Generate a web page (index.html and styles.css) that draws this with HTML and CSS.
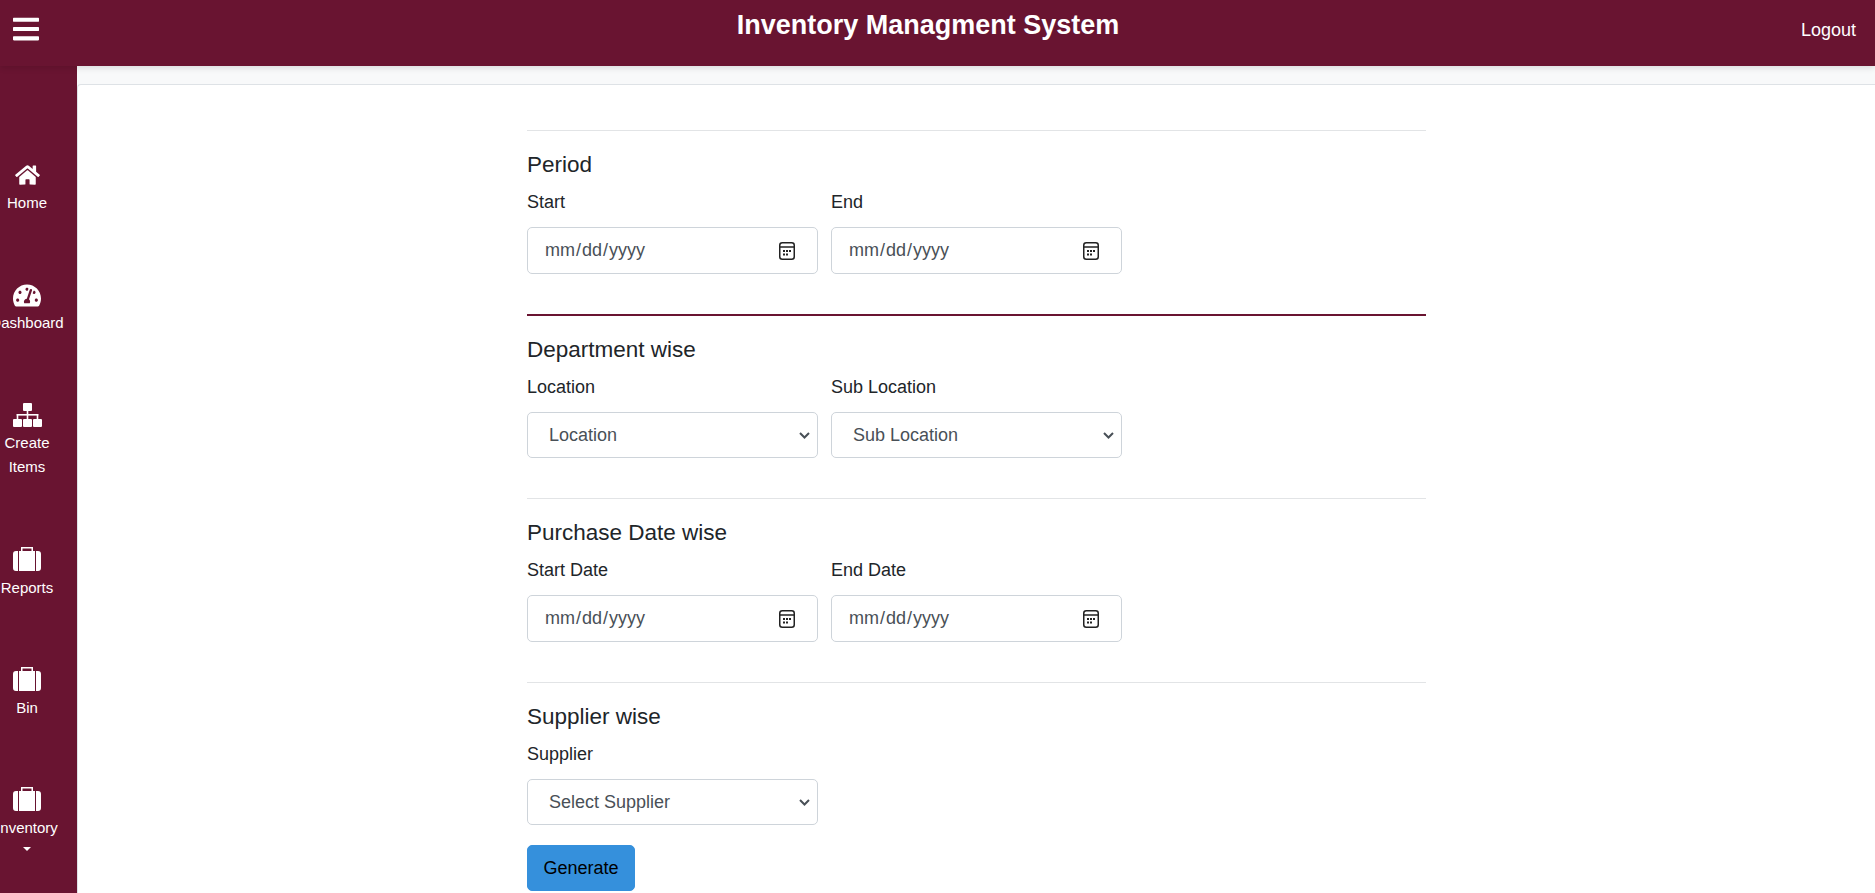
FILE: index.html
```html
<!DOCTYPE html>
<html lang="en">
<head>
  <meta charset="UTF-8">
  <title>Inventory Managment System</title>
  <link rel="stylesheet" href="styles.css">
</head>
<body>

  <header class="topbar">
    <div class="menu-toggle">
      <svg class="icon-bars" viewBox="0 0 448 512"><path d="M16 132h416c8.837 0 16-7.163 16-16V76c0-8.837-7.163-16-16-16H16C7.163 60 0 67.163 0 76v40c0 8.837 7.163 16 16 16zm0 160h416c8.837 0 16-7.163 16-16v-40c0-8.837-7.163-16-16-16H16c-8.837 0-16 7.163-16 16v40c0 8.837 7.163 16 16 16zm0 160h416c8.837 0 16-7.163 16-16v-40c0-8.837-7.163-16-16-16H16c-8.837 0-16 7.163-16 16v40c0 8.837 7.163 16 16 16z"/></svg>
    </div>
    <h1 class="app-title">Inventory Managment System</h1>
    <a class="logout" href="#">Logout</a>
  </header>

  <div class="layout">
    <nav class="sidebar">
      <a class="nav-item" href="#">
        <span class="nav-icon"><svg class="icon-home" viewBox="0 0 576 512"><path d="M280.37 148.26L96 300.11V464a16 16 0 0 0 16 16l112.06-.29a16 16 0 0 0 15.92-16V368a16 16 0 0 1 16-16h64a16 16 0 0 1 16 16v95.64a16 16 0 0 0 16 16.05L464 480a16 16 0 0 0 16-16V300L295.67 148.26a12.19 12.19 0 0 0-15.3 0zM571.6 251.47L488 182.56V44.05a12 12 0 0 0-12-12h-56a12 12 0 0 0-12 12v72.61L318.47 43a48 48 0 0 0-61 0L4.34 251.47a12 12 0 0 0-1.6 16.9l25.5 31A12 12 0 0 0 45.15 301l235.22-193.74a12.19 12.19 0 0 1 15.3 0L530.9 301a12 12 0 0 0 16.9-1.6l25.5-31a12 12 0 0 0-1.7-16.93z"/></svg></span>
        <span class="nav-label">Home</span>
      </a>
      <a class="nav-item" href="#">
        <span class="nav-icon"><svg class="icon-gauge" viewBox="0 0 576 512"><path d="M288 32C128.94 32 0 160.94 0 320c0 52.8 14.25 102.26 39.06 144.8 5.61 9.62 16.3 15.2 27.44 15.2h443c11.14 0 21.83-5.58 27.44-15.2C561.75 422.26 576 372.8 576 320c0-159.06-128.94-288-288-288zm0 64c14.71 0 26.58 10.13 30.32 23.65-1.11 2.26-2.64 4.23-3.45 6.67l-9.22 27.67c-5.13 3.49-10.97 6.01-17.64 6.01-17.67 0-32-14.33-32-32S270.33 96 288 96zM96 384c-17.67 0-32-14.33-32-32s14.33-32 32-32 32 14.33 32 32-14.33 32-32 32zm48-160c-17.67 0-32-14.33-32-32s14.33-32 32-32 32 14.33 32 32-14.33 32-32 32zm246.77-72.41l-61.33 184C343.13 347.33 352 364.54 352 384c0 11.72-3.38 22.55-8.88 32H232.88c-5.5-9.45-8.88-20.28-8.88-32 0-33.94 26.5-61.43 59.9-63.59l61.34-184.01c4.17-12.56 17.73-19.45 30.36-15.17 12.57 4.19 19.35 17.79 15.17 30.36zm14.66 57.2l15.52-46.55c3.47-1.29 7.13-2.23 11.05-2.23 17.67 0 32 14.33 32 32s-14.33 32-32 32c-11.38-.01-20.89-6.28-26.57-15.22zM480 384c-17.67 0-32-14.33-32-32s14.33-32 32-32 32 14.33 32 32-14.33 32-32 32z"/></svg></span>
        <span class="nav-label">Dashboard</span>
      </a>
      <a class="nav-item" href="#">
        <span class="nav-icon"><svg class="icon-sitemap" viewBox="0 0 29 24"><rect x="10" y="0" width="9" height="8" rx="1"/><rect x="13.7" y="8" width="1.6" height="8"/><rect x="3.7" y="11" width="21.6" height="1.6"/><rect x="3.7" y="11" width="1.6" height="5"/><rect x="23.7" y="11" width="1.6" height="5"/><rect x="0" y="16" width="9" height="8" rx="1"/><rect x="10" y="16" width="9" height="8" rx="1"/><rect x="20" y="16" width="9" height="8" rx="1"/></svg></span>
        <span class="nav-label">Create</span>
        <span class="nav-label">Items</span>
      </a>
      <a class="nav-item" href="#">
        <span class="nav-icon"><svg class="icon-suitcase" viewBox="0 0 28 24"><path d="M5 4H3a3 3 0 0 0-3 3v14a3 3 0 0 0 3 3h2zM6 4h16v20H6zM23 4h2a3 3 0 0 1 3 3v14a3 3 0 0 1-3 3h-2z"/><rect class="handle" x="8.75" y=".75" width="10.5" height="4"/></svg></span>
        <span class="nav-label">Reports</span>
      </a>
      <a class="nav-item" href="#">
        <span class="nav-icon"><svg class="icon-suitcase" viewBox="0 0 28 24"><path d="M5 4H3a3 3 0 0 0-3 3v14a3 3 0 0 0 3 3h2zM6 4h16v20H6zM23 4h2a3 3 0 0 1 3 3v14a3 3 0 0 1-3 3h-2z"/><rect class="handle" x="8.75" y=".75" width="10.5" height="4"/></svg></span>
        <span class="nav-label">Bin</span>
      </a>
      <a class="nav-item" href="#">
        <span class="nav-icon"><svg class="icon-suitcase" viewBox="0 0 28 24"><path d="M5 4H3a3 3 0 0 0-3 3v14a3 3 0 0 0 3 3h2zM6 4h16v20H6zM23 4h2a3 3 0 0 1 3 3v14a3 3 0 0 1-3 3h-2z"/><rect class="handle" x="8.75" y=".75" width="10.5" height="4"/></svg></span>
        <span class="nav-label">Inventory</span>
        <span class="nav-caret"></span>
      </a>
    </nav>

    <main class="content">
      <div class="card">
        <form class="report-form">
          <section class="form-section">
            <h5>Period</h5>
            <div class="field-row">
              <div class="field">
                <label>Start</label>
                <input type="date" class="form-input">
              </div>
              <div class="field">
                <label>End</label>
                <input type="date" class="form-input">
              </div>
            </div>
          </section>

          <section class="form-section accent">
            <h5>Department wise</h5>
            <div class="field-row">
              <div class="field">
                <label>Location</label>
                <select class="form-select"><option>Location</option></select>
              </div>
              <div class="field">
                <label>Sub Location</label>
                <select class="form-select"><option>Sub Location</option></select>
              </div>
            </div>
          </section>

          <section class="form-section">
            <h5>Purchase Date wise</h5>
            <div class="field-row">
              <div class="field">
                <label>Start Date</label>
                <input type="date" class="form-input">
              </div>
              <div class="field">
                <label>End Date</label>
                <input type="date" class="form-input">
              </div>
            </div>
          </section>

          <section class="form-section last">
            <h5>Supplier wise</h5>
            <div class="field-row">
              <div class="field">
                <label>Supplier</label>
                <select class="form-select"><option>Select Supplier</option></select>
              </div>
            </div>
            <button type="button" class="btn-generate">Generate</button>
          </section>
        </form>
      </div>
    </main>
  </div>

</body>
</html>
```

FILE: styles.css
```css
* {
  box-sizing: border-box;
}

html, body {
  height: 100%;
}

body {
  margin: 0;
  font-family: "Liberation Sans", Arial, sans-serif;
  font-size: 18px;
  line-height: 1.5;
  color: #212529;
  background-color: #f8f9fa;
  overflow: hidden;
}

/* top bar */
.topbar {
  position: relative;
  z-index: 2;
  display: grid;
  grid-template-columns: 1fr auto 1fr;
  height: 66px;
  padding: 0 19px 0 13px;
  background-color: #691431;
  color: #fff;
  box-shadow: 0 2px 6px rgba(0, 0, 0, .12);
}

.menu-toggle {
  padding-top: 14px;
}

.icon-bars {
  display: block;
  width: 26px;
  height: 30px;
  fill: #fff;
}

.app-title {
  margin: 7px 13px 0 0;
  font-size: 27px;
  font-weight: 700;
  line-height: 36px;
}

.logout {
  justify-self: end;
  padding-top: 17px;
  color: #fff;
  text-decoration: none;
}

/* sidebar + page */
.layout {
  display: flex;
  height: calc(100% - 66px);
}

.sidebar {
  flex: 0 0 77px;
  padding: 95px 23px 0 0;
  background-color: #691431;
  overflow: hidden;
}

.nav-item {
  display: flex;
  flex-direction: column;
  align-items: center;
  margin-bottom: 66.2px;
  color: #fff;
  text-decoration: none;
}

.nav-icon {
  display: flex;
  align-items: center;
  justify-content: center;
  height: 30px;
  padding-bottom: 2px;
}

.nav-icon svg {
  display: block;
  fill: #fff;
}

.icon-home {
  width: 25px;
  height: 22px;
}

.icon-gauge {
  width: 28px;
  height: 25px;
}

.icon-sitemap {
  width: 29px;
  height: 24px;
}

.icon-suitcase {
  width: 28px;
  height: 24px;
  margin-bottom: 2px;
}

.icon-suitcase .handle {
  fill: none;
  stroke: #fff;
  stroke-width: 1.5;
}

.nav-label {
  font-size: 15px;
  line-height: 24px;
  white-space: nowrap;
}

.nav-caret {
  margin-top: 7px;
  border-top: 4px solid #fff;
  border-left: 4.5px solid transparent;
  border-right: 4.5px solid transparent;
}

.content {
  flex: 1;
  padding-top: 18px;
  min-width: 0;
}

.card {
  height: 100%;
  padding-top: 45px;
  background-color: #fff;
  border-top: 1px solid #dee2e6;
  border-left: 1px solid #dee2e6;
  border-top-left-radius: 4px;
}

/* form */
.report-form {
  width: 899px;
  margin: 0 auto;
}

.form-section {
  padding-top: 20px;
  padding-bottom: 40px;
  border-top: 1px solid #e2e4e6;
}

.form-section.accent {
  border-top: 2px solid #691431;
}

.form-section.last {
  padding-bottom: 0;
}

h5 {
  margin: 0 0 11px;
  font-size: 22.5px;
  font-weight: 400;
  line-height: 27px;
}

.field-row {
  display: flex;
  gap: 13px;
}

.field {
  width: 291px;
}

label {
  display: block;
  margin-bottom: 11px;
  line-height: 27px;
}

.form-input,
.form-select {
  display: block;
  width: 100%;
  font-family: inherit;
  font-size: 18px;
  color: #495057;
  background-color: #fff;
  border: 1px solid #ced4da;
  border-radius: 5px;
}

.form-input {
  height: 47px;
  padding: 0 22px 0 16px;
}

.form-input::-webkit-calendar-picker-indicator {
  width: 16px;
  height: 18px;
  margin: 0;
  padding: 0;
  background: url("data:image/svg+xml,%3Csvg xmlns='http://www.w3.org/2000/svg' viewBox='0 0 16 18'%3E%3Crect x='.75' y='.75' width='14.5' height='16.5' rx='2.5' fill='none' stroke='%23222' stroke-width='1.5'/%3E%3Cpath d='M1 5h14' stroke='%23222' stroke-width='1.5'/%3E%3Cg fill='%23222'%3E%3Crect x='4' y='8' width='2' height='2'/%3E%3Crect x='7' y='8' width='2' height='2'/%3E%3Crect x='10' y='8' width='2' height='2'/%3E%3Crect x='4' y='11.5' width='2' height='2'/%3E%3Crect x='7' y='11.5' width='2' height='2'/%3E%3C/g%3E%3C/svg%3E") no-repeat center;
}

.form-select {
  height: 46px;
  padding: 0 21px;
  appearance: none;
  background: #fff url("data:image/svg+xml,%3Csvg xmlns='http://www.w3.org/2000/svg' viewBox='0 0 11 7'%3E%3Cpath d='M1 1l4.5 4.5L10 1' fill='none' stroke='%23495057' stroke-width='2'/%3E%3C/svg%3E") no-repeat right 7px center / 11px 7px;
}

.btn-generate {
  display: block;
  width: 108px;
  height: 46px;
  margin-top: 20px;
  font-family: inherit;
  font-size: 18px;
  color: #000;
  background-color: #3590dc;
  border: 1px solid #3590dc;
  border-radius: 5px;
}
```
